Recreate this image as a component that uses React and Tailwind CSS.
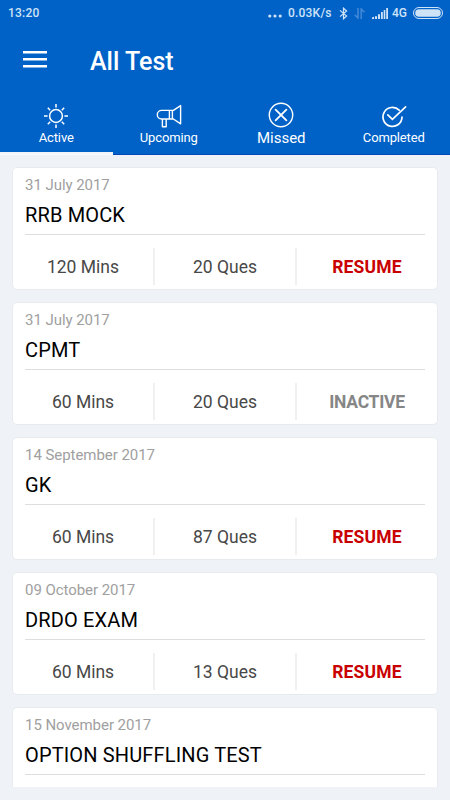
import React from "react";

const tests = [
  { date: "31 July 2017", name: "RRB MOCK", mins: 120, ques: 20, action: "RESUME" },
  { date: "31 July 2017", name: "CPMT", mins: 60, ques: 20, action: "INACTIVE" },
  { date: "14 September 2017", name: "GK", mins: 60, ques: 87, action: "RESUME" },
  { date: "09 October 2017", name: "DRDO EXAM", mins: 60, ques: 13, action: "RESUME" },
  { date: "15 November 2017", name: "OPTION SHUFFLING TEST" },
];

function StatusBar() {
  return (
    <div className="flex h-[26px] items-center pl-2 pr-[6px] text-[12px] leading-none font-medium text-[#cfe3f7]">
      <span className="tracking-[0.2px]">13:20</span>
      <svg className="ml-auto h-[4px] w-[14px] translate-y-[3px]" viewBox="0 0 14 4" fill="currentColor">
        <circle cx="1.8" cy="2" r="1.6" /><circle cx="7" cy="2" r="1.6" /><circle cx="12.2" cy="2" r="1.6" />
      </svg>
      <span className="ml-[6px] w-[44px] whitespace-nowrap tracking-[0.2px]">0.03K/s</span>
      <svg className="ml-[7px] h-[13px] w-[9px]" viewBox="0 0 9 13" fill="none" stroke="currentColor" strokeWidth="1.2">
        <path d="M1 3.4 7.6 9 4.5 11.8V1.2L7.6 4 1 9.6" />
      </svg>
      <svg className="ml-[6px] h-[11px] w-[11px]" viewBox="0 0 11 11" fill="none" stroke="#4489d8" strokeWidth="1.5">
        <path d="M4 0v10L.7 6.7M7.2 11V1l3.2 3.3" />
      </svg>
      <svg className="ml-[7px] h-[11px] w-[16px]" viewBox="0 0 16 11" fill="currentColor">
        <path d="M0 11V9.6L2 8.7V11zM3 11V8.2h2V11zM6 11V6.2h2V11zM9 11V4h1.8v7zM11.7 11V2h1.6v9zM14.2 11V0H16v11z" />
      </svg>
      <span className="ml-[4px] w-[16px] whitespace-nowrap">4G</span>
      <svg className="ml-[5px] h-[12px] w-[31px]" viewBox="0 0 31 12" fill="none">
        <rect x=".5" y=".5" width="29" height="11" rx="5.5" stroke="currentColor" />
        <rect x="2.2" y="2.2" width="25.6" height="7.6" rx="3.8" fill="currentColor" />
      </svg>
    </div>
  );
}

function SunIcon() {
  return (
    <svg className="h-[26px] w-[26px]" viewBox="0 0 26 26" fill="none" stroke="white" strokeWidth="1.5">
      <circle cx="13" cy="14" r="6.4" />
      <path d="M13 2v3.6M13 22.4V26M1 14h3.6M21.4 14H25M4.8 5.8l2.4 2.4M18.8 19.8l2.4 2.4M21.2 5.8l-2.4 2.4M7.2 19.8l-2.4 2.4" />
    </svg>
  );
}

function MegaphoneIcon() {
  return (
    <svg className="h-[26px] w-[26px]" viewBox="0 0 26 26" fill="none" stroke="white" strokeWidth="1.4" strokeLinejoin="round">
      <path d="M13.4 8.4H5.6a4.3 4.3 0 0 0 0 8.6h7.8M13.4 8v9.4M16.4 8v9.4M13.4 8.4h4L24.6 3.6v18.2L17.4 17h-4M6.4 17.2v7.6h3.8v-7.6" />
    </svg>
  );
}

function MissedIcon() {
  return (
    <svg className="h-[26px] w-[26px]" viewBox="0 0 26 26" fill="none" stroke="white" strokeLinecap="round">
      <circle cx="13" cy="13" r="11.7" strokeWidth="1.4" />
      <path d="m7.6 7.6 10.8 10.8M18.4 7.6 7.6 18.4" strokeWidth="1.8" />
    </svg>
  );
}

function CompletedIcon() {
  return (
    <svg className="h-[26px] w-[26px]" viewBox="0 0 26 26" fill="none" stroke="white" strokeWidth="1.7" strokeLinecap="round">
      <path d="M18.2 8.2A9.5 9.5 0 1 0 21 15" />
      <path d="m6.8 12.8 4.6 4.6L24.6 4.8" />
    </svg>
  );
}

function Tab({ icon, label, active = false, large = false }) {
  return (
    <div className={"flex flex-col items-center border-b text-white " + (active ? "border-[#f8fafc]" : "border-[#0047b8]")}>
      {icon}
      <span className={large ? "-mt-px text-[15px] leading-[22px]" : "text-[13px] leading-[20px] tracking-[-0.15px]"}>{label}</span>
      {active && <div className="mt-auto h-[2px] w-full bg-[#f1f5fb]" />}
    </div>
  );
}

function TestCard({ test }) {
  return (
    <div className="h-[123px] shrink-0 rounded-[5px] border border-[#e8ebee] bg-white px-[12px]">
      <div className="pt-[7px] text-[15px] leading-[20px] tracking-[-0.05px] text-[#a0a0a0]">{test.date}</div>
      <div className="h-[40px] border-b border-[#dedede] pt-[7px] text-[20px] leading-[26px] tracking-[0.15px] text-black">{test.name}</div>
      {test.action && (
        <div className="mx-[-12px] flex h-[54px] items-center pt-[9px] text-center text-[17.5px] text-[#484848]">
          <div className="flex h-[37px] flex-1 items-center justify-center border-r-2 border-[#f0f0f0] pt-[2px]">{test.mins} Mins</div>
          <div className="flex h-[37px] flex-1 items-center justify-center border-r-2 border-[#f0f0f0] pt-[2px]">{test.ques} Ques</div>
          <div className={"flex h-[37px] flex-1 items-center justify-center pt-[2px] font-bold " + (test.action === "RESUME" ? "tracking-[0.2px] text-[#c90000]" : "tracking-[-0.25px] text-[#868686]")}>{test.action}</div>
        </div>
      )}
    </div>
  );
}

export default function App() {
  return (
    <div className="flex h-[800px] w-[450px] flex-col overflow-hidden bg-[#eff3f7] font-[Roboto,sans-serif]">
      <header className="flex h-[155px] shrink-0 flex-col bg-[#0062c7]">
        <StatusBar />
        <div className="flex h-[70px] items-center pl-[23px]">
          <svg className="-mt-[3px] h-[17px] w-[24px]" viewBox="0 0 24 17" fill="white">
            <path d="M0 0h24v2.5H0zM0 7h24v2.5H0zM0 14h24v2.5H0z" />
          </svg>
          <h1 className="ml-[43px] mt-[2px] text-[25px] leading-[30px] font-medium text-white">All Test</h1>
        </div>
        <nav className="grid flex-1 grid-cols-4 pt-[6px]">
          <Tab icon={<SunIcon />} label="Active" active />
          <Tab icon={<MegaphoneIcon />} label="Upcoming" />
          <Tab icon={<MissedIcon />} label="Missed" large />
          <Tab icon={<CompletedIcon />} label="Completed" />
        </nav>
      </header>
      <main className="mx-3 mb-[13px] mt-3 flex min-h-0 flex-1 flex-col gap-3 overflow-hidden">
        {tests.map((test) => <TestCard key={test.date + test.name} test={test} />)}
      </main>
    </div>
  );
}
